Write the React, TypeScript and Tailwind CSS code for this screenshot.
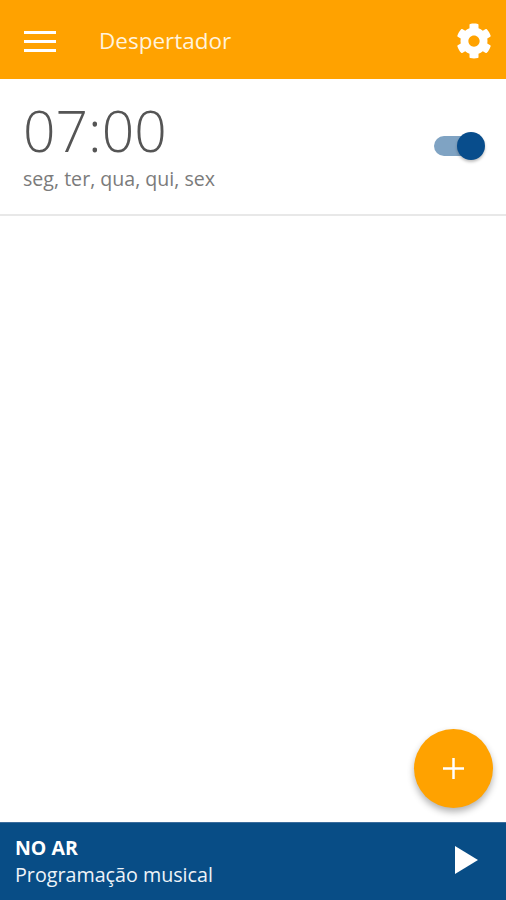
import { FaCog } from "react-icons/fa";

export default function App() {
  return (
    <div className="relative flex h-[900px] w-[506px] flex-col overflow-hidden bg-white font-['Open_Sans',sans-serif]">
      <header className="flex h-[79px] items-center bg-[#ffa200] pt-[3px] pr-[14px] pl-[24px] text-white">
        <div className="flex w-[32px] flex-col gap-[6px]">
          <span className="h-[3px] bg-white" />
          <span className="h-[3px] bg-white" />
          <span className="h-[3px] bg-white" />
        </div>
        <h1 className="ml-[43px] flex-1 text-[22.5px] leading-none text-[#fff3dd]">Despertador</h1>
        <FaCog className="h-[36px] w-[36px]" />
      </header>

      <main className="flex-1">
        <div className="flex h-[137px] items-center justify-between border-b-2 border-[#e8e8e8] pr-[25px] pl-[23px]">
          <div className="mb-[2px] flex flex-col">
            <span className="text-[57px] leading-[60px] font-light text-[#555555]">07:00</span>
            <span className="mt-[7px] text-[19.6px] leading-[24px] text-[#7b7b7b]">seg, ter, qua, qui, sex</span>
          </div>
          <div className="relative mb-[2px] h-[20px] w-[47px] rounded-full bg-[#7fa3c3]">
            <span className="absolute top-[-4px] right-[-4px] h-[28px] w-[28px] rounded-full bg-[#084d8c] shadow-[0_2px_3px_rgba(0,0,0,0.25)]" />
          </div>
        </div>
      </main>

      <button
        type="button"
        aria-label="Adicionar"
        className="absolute top-[729px] left-[414px] flex h-[79px] w-[79px] items-center justify-center rounded-full bg-[#ffa200] shadow-[0_4px_7px_rgba(0,0,0,0.3)]"
      >
        <svg width="21" height="21" viewBox="0 0 22 22" fill="none" stroke="#fff" strokeWidth="2.6">
          <path d="M11 0v22M0 11h22" />
        </svg>
      </button>

      <footer className="flex h-[78px] items-center justify-between border-t border-[#3c6d9d] bg-[#084d86] pr-[28px] pb-[3px] pl-[15px] text-white">
        <div className="mt-[2px] flex flex-col">
          <span className="text-[19.5px] leading-[27px] font-bold">NO AR</span>
          <span className="text-[19.7px] leading-[27px] text-[#eef3f8]">Programação musical</span>
        </div>
        <svg width="23" height="28" viewBox="0 0 23 28" fill="#fff">
          <path d="M0 0l23 14L0 28z" />
        </svg>
      </footer>
    </div>
  );
}
